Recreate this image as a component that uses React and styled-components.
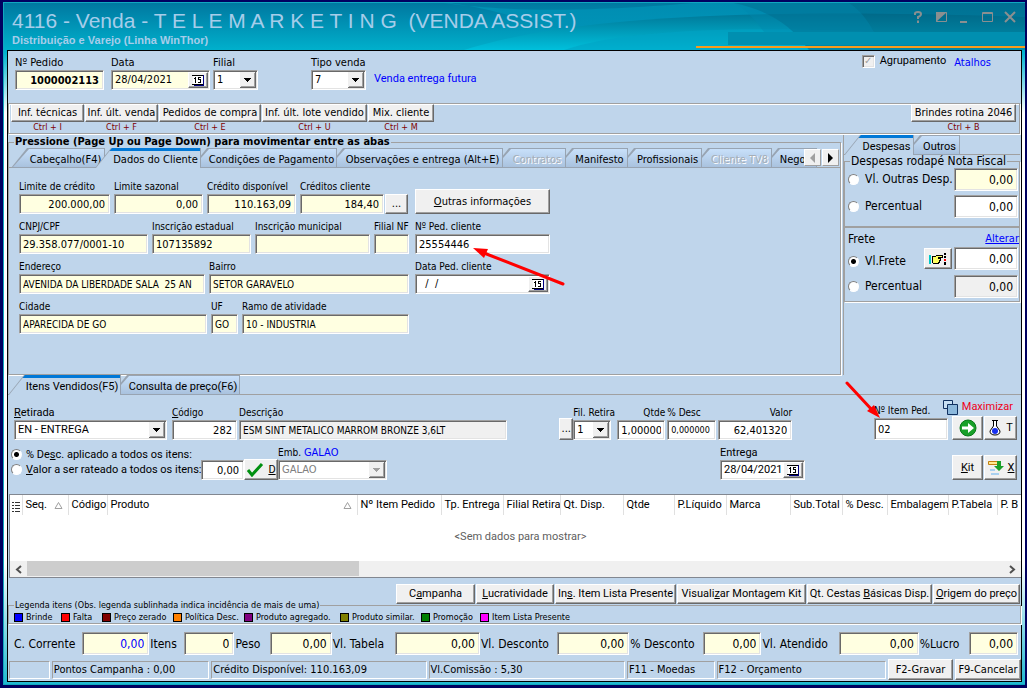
import React from 'react'
import styled, { createGlobalStyle, css } from 'styled-components'

const GlobalStyle = createGlobalStyle`
  * { box-sizing: border-box; }
  body {
    margin: 0;
    background: #000060;
    color: #000;
    font: 10px/14px "DejaVu Sans Condensed", "DejaVu Sans", sans-serif;
  }
  input, select, button { font: inherit; color: inherit; margin: 0; border-radius: 0; }
  fieldset { margin: 0; padding: 0; min-width: 0; }
`

const sans = 'Roboto, "Liberation Sans", Arial, sans-serif'
const titleFont = '"Liberation Sans", Arial, sans-serif'

const sunken = css`
  border: 1px solid;
  border-color: #a0a0a0 #fff #fff #a0a0a0;
  box-shadow: inset 1px 1px #696969, inset -1px -1px #e3e3e3;
`

const raised = css`
  border: 1px solid;
  border-color: #fff #696969 #696969 #fff;
  box-shadow: inset -1px -1px #a0a0a0;
  background: #f0f0f0;
`

const Window = styled.div`
  position: relative;
  min-height: 100vh;
  padding: 2px 2px 3px 3px;
  display: flex;
`

const Frame = styled.div`
  flex: 1;
  min-width: 0;
  display: flex;
  flex-direction: column;
  padding: 0 3px 2px;
  border: 1px solid #10a8c0;
  border-right-width: 0;
  background: linear-gradient(#00789c 0, #00b4d0 50px, #fff 110px, #fff 560px, #20b8d0 100%);
`

const TitleBar = styled.header`
  position: relative;
  height: 47px;
  margin: 0 -3px;
  padding: 6px 8px 0;
  color: #a6cdea;
  font-family: ${titleFont};
`

const Waves = styled.svg`
  position: absolute;
  inset: 0;
  width: 100%;
  height: 100%;
`

const Title = styled.h1`
  position: relative;
  margin: 0;
  font-size: 21px;
  line-height: 24px;
  font-weight: 400;
  white-space: pre;
`

const Subtitle = styled.div`
  position: relative;
  font-size: 11px;
  line-height: 14px;
  font-weight: 700;
`

const WindowButtons = styled.div`
  position: absolute;
  top: 6px;
  right: 7px;
  display: flex;
  gap: 7px;
`

const WindowButton = styled.button`
  width: 16px;
  height: 16px;
  padding: 0;
  border: 0;
  background: none;
  color: #8a8f90;
  display: flex;
`

const Panel = styled.main`
  flex: 1;
  display: flex;
  flex-direction: column;
  border: 1px solid #000;
  background: #bfd5eb;
`

const HeaderRow = styled.div`
  display: flex;
  align-items: flex-start;
  padding: 4px 30px 0 7px;
  height: 52px;
`

const FieldBox = styled.label`
  display: flex;
  flex-direction: column;
  width: ${p => p.$w}px;
  margin-left: ${p => p.$ml || 0}px;
  flex: none;
  font-family: ${p => (p.$sans ? sans : 'inherit')};
  font-size: ${p => (p.$sans || p.$large ? 11 : 10)}px;
  text-align: ${p => (p.$labelRight ? 'right' : 'left')};
  white-space: nowrap;
`

const LabelText = styled.span`
  height: 15px;
  line-height: 15px;
`

const Input = styled.input`
  ${sunken}
  width: 100%;
  min-width: 0;
  height: ${p => p.$h || 20}px;
  padding: 0 ${p => (p.$right ? 4 : 3)}px;
  font-size: ${p => p.$size || 11}px;
  font-weight: ${p => (p.$bold ? 700 : 400)};
  text-align: ${p => (p.$right ? 'right' : 'left')};
  color: ${p => p.$color || '#000'};
  background: ${p => p.$bg || '#ffffe1'};
`

const Combo = styled.span`
  ${sunken}
  position: relative;
  display: block;
  width: 100%;
  height: 20px;
  background: #fff;
  svg { position: absolute; right: 1px; top: 1px; pointer-events: none; }
`

const Select = styled.select`
  appearance: none;
  display: block;
  width: 100%;
  height: 18px;
  padding: 0 18px 0 3px;
  border: 0;
  background: none;
  font-size: 11px;
  opacity: 1;
  color: ${p => (p.disabled ? '#808080' : '#000')};
`

const DateBox = styled.span`
  ${sunken}
  display: flex;
  height: 20px;
  background: ${p => p.$bg || '#ffffe1'};
  padding: 1px;
  input {
    flex: 1;
    width: 20px;
    border: 0;
    padding: 0 0 0 2px;
    background: none;
    font-size: 11px;
  }
  button { ${raised} width: 20px; height: 16px; padding: 1px 3px; display: flex; }
`

const Btn = styled.button`
  ${raised}
  width: ${p => (p.$w ? p.$w + 'px' : 'auto')};
  height: ${p => p.$h || 20}px;
  margin-left: ${p => p.$ml || 0}px;
  padding: 0;
  flex: none;
  display: flex;
  align-items: center;
  justify-content: center;
  gap: 4px;
  font-family: ${p => (p.$sans ? sans : 'inherit')};
  font-size: 11px;
  white-space: nowrap;
`

const Note = styled.span`
  color: #00f;
  font: 11px/14px ${sans};
  margin: 17px 0 0 8px;
`

const Grouping = styled.label`
  margin: 0 0 0 auto;
  display: flex;
  align-items: center;
  gap: 5px;
  height: 12px;
  font: 11px/14px ${sans};
  input {
    appearance: none;
    ${sunken}
    width: 13px;
    height: 13px;
    background: #f0f0f0;
    display: grid;
    place-items: center;
  }
  input:checked::after { content: '✓'; color: #a0a0a0; font: 700 10px/10px "DejaVu Sans", sans-serif; }
`

const Link = styled.a`
  color: #00f;
  font-size: 11px;
  line-height: 14px;
  margin: ${p => p.$m || 0};
  text-decoration: ${p => (p.$underline ? 'underline' : 'none')};
`

const etched = css`
  border: 1px solid #a0a0a0;
  box-shadow: 1px 1px #fff, inset 1px 1px #fff;
`

const Toolbar = styled.div`
  ${etched}
  display: flex;
  height: 31px;
  margin: 0 1px 0 0;
  padding-left: 2px;
`

const Shortcut = styled.div`
  margin-left: ${p => (p.$auto ? 'auto' : 0)};
  margin-right: ${p => (p.$auto ? '3px' : '1px')};
  span { display: block; text-align: center; color: #800000; font-size: 9px; line-height: 11px; }
`

const Middle = styled.div`
  display: flex;
  gap: 2px;
  height: 241px;
`

const CustomerBox = styled.section`
  flex: 1;
  min-width: 0;
  display: flex;
  flex-direction: column;
  padding-top: 2px;
`

const Fieldset = styled.fieldset`
  border: 1px solid #a0a0a0;
  box-shadow: 1px 1px #fff;
  flex: ${p => (p.$grow ? 1 : 'none')};
  legend {
    margin-left: 5px;
    padding: 0 1px;
    font-size: ${p => p.$size || 11}px;
    line-height: 12px;
    font-weight: ${p => (p.$bold ? 700 : 400)};
    white-space: nowrap;
  }
`

const TabBar = styled.div`
  position: relative;
  display: flex;
  align-items: flex-end;
  height: 20px;
  padding-left: ${p => p.$pl || 0}px;
  overflow: hidden;
  box-shadow: inset 0 -1px #a0a0a0;
`

const Tab = styled.button`
  position: relative;
  flex: none;
  height: 20px;
  width: ${p => p.$w + 10}px;
  margin-right: -10px;
  padding: 4px 2px 0 17px;
  border: 0;
  background: #98a4b2;
  clip-path: polygon(0 100%, 16px 0, 100% 0, 100% 100%);
  z-index: ${p => (p.$active ? 20 : p.$z)};
  font-family: ${p => (p.$sans ? sans : 'inherit')};
  font-size: 11px;
  line-height: 14px;
  white-space: nowrap;
  text-align: center;
  color: ${p => (p.disabled ? '#a5adb6' : '#000')};
  text-shadow: ${p => (p.disabled ? '1px 1px #fff' : 'none')};
  &::before {
    content: '';
    position: absolute;
    z-index: -1;
    inset: ${p => (p.$active ? '0 1px 0 0' : '1px')};
    clip-path: polygon(1px 100%, 17px 0, 100% 0, 100% 100%);
    background: ${p => (p.$active
      ? 'linear-gradient(#0078d7 3px, #bfd5eb 3px)'
      : 'linear-gradient(#c8e0fa, #a9c2de)')};
  }
`

const TabArrows = styled.div`
  position: absolute;
  right: 1px;
  top: 1px;
  z-index: 30;
  display: flex;
  gap: 1px;
  background: #bfd5eb;
  button { ${raised} border-color: #fff #a0a0a0 #a0a0a0 #fff; box-shadow: none; width: 17px; height: 17px; padding: 0; display: grid; place-items: center; }
`

const CustomerForm = styled.div`
  display: grid;
  grid-template-columns: 390px 135px;
  column-gap: 6px;
  row-gap: 5px;
  padding: 11px 0 0 10px;
`

const FieldRow = styled.div`
  display: flex;
  gap: 4px;
  align-items: flex-end;
`

const Expenses = styled.aside`
  width: 178px;
  margin-top: 1px;
  padding-right: 1px;
  border-left: 1px solid #a0a0a0;
`

const ExpenseGrid = styled.div`
  display: grid;
  grid-template-columns: 1fr 64px;
  align-items: center;
  row-gap: ${p => p.$gap}px;
  padding: ${p => p.$p};
  font-size: 12px;
`

const Radio = styled.label`
  display: flex;
  align-items: center;
  gap: ${p => (p.$sans ? 4 : 6)}px;
  white-space: nowrap;
  font-family: ${p => (p.$sans ? sans : 'inherit')};
  font-size: ${p => (p.$sans ? 11 : 12)}px;
  line-height: 15px;
  input {
    appearance: none;
    flex: none;
    width: 11px;
    height: 11px;
    border: 1px solid;
    border-color: #808080 #fff #fff #808080;
    border-radius: 50%;
    background: #fff;
  }
  input:checked { background: radial-gradient(circle, #000 2px, #fff 3px); }
`

const FreightTitle = styled.div`
  display: flex;
  justify-content: space-between;
  padding: 4px 0 0 3px;
  font-size: 12px;
  line-height: 15px;
`

const Spacer = styled.div`
  flex: ${p => p.$n} 1 0;
`

const ItemRow = styled.div`
  display: flex;
  align-items: flex-end;
  padding: ${p => p.$p};
`

const RadioStack = styled.div`
  width: 190px;
  padding-bottom: 3px;
`

const PedStack = styled.div`
  display: flex;
  flex-direction: column;
`

const Maximize = styled.div`
  display: flex;
  align-items: center;
  justify-content: space-between;
  width: 139px;
  height: 18px;
  font-size: 10px;
  label { padding-top: 8px; }
  button { display: flex; align-items: center; gap: 4px; padding: 0; border: 0; background: none; color: #f00018; font: 11px/14px ${sans}; }
`

const GridPanel = styled.div`
  margin: 14px 0 0 1px;
  border: 1px solid #828790;
  border-width: 1px 0 1px 1px;
  background: #fff;
  flex: 1;
  display: flex;
  flex-direction: column;
  overflow: hidden;
`

const ItemsTable = styled.table`
  table-layout: fixed;
  width: 100%;
  border-collapse: collapse;
  font: 11px/14px ${sans};
  th {
    height: 20px;
    padding: 0 0 0 3px;
    border-right: 1px solid #e0e0e0;
    font-weight: 400;
    text-align: left;
    white-space: nowrap;
    overflow: hidden;
  }
  th:last-child { border-right: 0; }
  th svg { float: right; margin: 3px 5px 0 0; }
  th:first-child svg { float: none; margin: 2px 0 0; display: block; }
  th:first-child { padding-left: 2px; }
  td { height: 44px; padding: 0 0 0 10px; text-align: center; color: #606060; }
`

const ScrollBar = styled.div`
  display: flex;
  margin-top: auto;
  height: 16px;
  background: #f0f0f0;
  button { width: 17px; padding: 0; border: 0; background: none; display: grid; place-items: center; }
  div { flex: 1; }
  div::before { content: ''; display: block; width: 34%; height: 15px; background: #cdcdcd; }
`

const ActionRow = styled.div`
  display: flex;
  justify-content: flex-end;
  gap: 1px;
  padding: 6px 1px 0 0;
  height: 21px;
`

const Legend = styled.ul`
  display: grid;
  grid-template-columns: 47fr 41fr 71fr 71fr 96fr 81fr 59fr 540fr;
  margin: 0;
  padding: 0 0 0 5px;
  list-style: none;
  font-size: 9px;
  line-height: 12px;
  li { display: flex; align-items: center; gap: 3px; white-space: nowrap; }
`

const Swatch = styled.i`
  width: 9px;
  height: 9px;
  border: 1px solid #000;
  background: ${p => p.$c};
`

const Totals = styled.div`
  display: grid;
  grid-template-columns: 69fr 67fr 35fr 50fr 35fr 62fr 63fr 85fr 77fr 72fr 74fr 58fr 77fr 80fr 50fr 49fr;
  align-items: center;
  padding: 8px 3px 1px 5px;
  font-size: 12px;
  white-space: nowrap;
  label { padding-left: 1px; }
`

const StatusBar = styled.footer`
  display: grid;
  grid-template-columns: 41fr 158fr 216fr 197fr 88fr 170fr 65px 66px;
  gap: 2px;
  align-items: center;
  padding: 3px 0 1px 1px;
  font-size: 11px;
`

const StatusCell = styled.div`
  height: 18px;
  padding-left: 1px;
  border: 1px solid;
  border-color: #a0a0a0 #fff #fff #a0a0a0;
  line-height: 16px;
  white-space: nowrap;
  overflow: hidden;
`

const Annotations = styled.svg`
  position: absolute;
  left: 0;
  top: 0;
  z-index: 50;
  pointer-events: none;
`

function Field({ label, w, ml, large, sans: useSans, labelRight, children, ...input }) {
  return (
    <FieldBox $w={w} $ml={ml} $large={large} $sans={useSans} $labelRight={labelRight}>
      <LabelText>{label}</LabelText>
      {children || <Input {...input} />}
    </FieldBox>
  )
}

function ComboBox({ value, disabled, ...rest }) {
  return (
    <Combo>
      <Select disabled={disabled} {...rest}><option>{value}</option></Select>
      <svg width="16" height="16" shapeRendering="crispEdges">
        <path d="M0 0h16v16H0z" fill="#f0f0f0" />
        <path d="M15 0v15H0" fill="none" stroke="#fff" />
        <path d="M15.5 0v15.5H0" fill="none" stroke="#696969" />
        <path d="M14.5 1v13.5H1" fill="none" stroke="#a0a0a0" />
        <path d="M4 6h7v1h-1v1H9v1H8v1H7v-1H6V8H5V7H4z" fill={disabled ? '#a0a0a0' : '#000'} />
      </svg>
    </Combo>
  )
}

function DateInput({ value, bg }) {
  return (
    <DateBox $bg={bg}>
      <input defaultValue={value} />
      <button aria-label="Calendário">
        <svg width="12" height="12" shapeRendering="crispEdges">
          <path d="M1 1h10v9H1z" fill="#fff" />
          <path d="M0 1h11M0 10.5h11" stroke="#000" />
          <path d="M11 1v10H2" fill="none" stroke="#000080" />
          <path d="M3 3v6M2 4h1M9 3.5H6v2h2.5v3H5.5" fill="none" stroke="#000" />
        </svg>
      </button>
    </DateBox>
  )
}

const SortArrow = () => (
  <svg width="9" height="9"><path d="M1 7.5 4.5 1.5 8 7.5z" fill="none" stroke="#a0a0a0" /></svg>
)

const Arrow = ({ left, off }) => (
  <svg width="9" height="10"><path d={left ? 'M7 0v10L2 5z' : 'M2 0v10l5-5z'} fill={off ? '#a0a0a0' : '#000'} /></svg>
)

const shortcuts = [
  ['Inf. técnicas', 'Ctrl + I', 73, 0],
  ['Inf. últ. venda', 'Ctrl + F', 73, 0],
  ['Pedidos de compra', 'Ctrl + E', 102, 0],
  ['Inf. últ. lote vendido', 'Ctrl + U', 105, 0],
  ['Mix. cliente', 'Ctrl + M', 66, 0],
  ['Brindes rotina 2046', 'Ctrl + B', 105, 1],
]

const customerTabs = [
  ['Cabeçalho(F4)', 84],
  ['Dados do Cliente', 96],
  ['Condições de Pagamento', 136],
  ['Observações e entrega (Alt+E)', 166],
  ['Contratos', 63],
  ['Manifesto', 62],
  ['Profissionais', 74],
  ['Cliente TV8', 70],
  ['Negoc.', 45],
]

const columns = [
  ['Seq.', 46, true],
  ['Código', 39],
  ['Produto', 250, true],
  ['Nº Item Pedido', 84],
  ['Tp. Entrega', 62],
  ['Filial Retira', 57],
  ['Qt. Disp.', 63],
  ['Qtde', 51],
  ['P.Líquido', 52],
  ['Marca', 64],
  ['Sub.Total', 52],
  ['% Desc.', 45],
  ['Embalagem', 61],
  ['P.Tabela', 49],
  ['P. B', 24],
]

const legend = [
  ['Brinde', '#0000ff'],
  ['Falta', '#ff0000'],
  ['Preço zerado', '#800000'],
  ['Política Desc.', '#ff8000'],
  ['Produto agregado.', '#800080'],
  ['Produto similar.', '#808000'],
  ['Promoção', '#008000'],
  ['Item Lista Presente', '#ff00ff'],
]

const totals = [
  ['C. Corrente', '0,00', '#00f'],
  ['Itens', '0'],
  ['Peso', '0,00'],
  ['Vl. Tabela', '0,00'],
  ['Vl. Desconto', '0,00'],
  ['% Desconto', '0,00'],
  ['Vl. Atendido', '0,00'],
  ['%Lucro', '0,00'],
]

export default function App() {
  return (
    <Window>
      <GlobalStyle />
      <Frame>
        <TitleBar>
          <Waves viewBox="0 0 1021 47" preserveAspectRatio="none">
            <defs>
              <linearGradient id="sky" x2="0" y2="1"><stop stopColor="#0078a0" /><stop offset="1" stopColor="#00b0cc" /></linearGradient>
              <linearGradient id="swell" x2="0" y2="1"><stop stopColor="#007898" /><stop offset="1" stopColor="#00c0dc" /></linearGradient>
              <linearGradient id="crest" x2="1" y2="0"><stop stopColor="#0090b4" /><stop offset="1" stopColor="#0098bc" stopOpacity="0.3" /></linearGradient>
            </defs>
            <path d="M0 0h1021v47H0z" fill="url(#sky)" />
            <path d="M440 0C500 8 570 10 690 0H1021V14C860 8 690 10 560 27C490 8 470 2 440 0z" fill="url(#crest)" />
            <path d="M460 47C560 16 720 4 1021 14V47z" fill="url(#swell)" />
            <path d="M560 47C610 30 700 24 820 27C900 29 960 38 1000 47z" fill="#00a4c4" opacity=".6" />
            <path d="M730 0C765 8 785 20 805 47H1021V0z" fill="#005878" opacity=".45" />
            <path d="M845 0C860 10 866 22 870 29H760C750 15 740 5 730 0z" fill="#0088ac" opacity=".4" />
            <path d="M724 29h297v13H724z" fill="#008fb0" />
            <path d="M692 43h329v2H692z" fill="#f89c1c" />
          </Waves>
          <Title>{'4116 - Venda - T E L E M A R K E T I N G  (VENDA ASSIST.)'}</Title>
          <Subtitle>Distribuição e Varejo (Linha WinThor)</Subtitle>
          <WindowButtons>
            <WindowButton aria-label="Ajuda"><svg width="16" height="16"><path d="M5 6V4.500Q5 3 8 3T11 5T8 8V10M8 11.500V14" fill="none" stroke="currentColor" strokeWidth="2" /></svg></WindowButton>
            <WindowButton aria-label="Tema"><svg width="16" height="16"><path d="M3.500 3.500h10v9h-10z" fill="none" stroke="currentColor" /><path d="M3 3h11L3 13z" fill="currentColor" /></svg></WindowButton>
            <WindowButton aria-label="Minimizar"><svg width="16" height="16"><path d="M4 13h7" stroke="currentColor" strokeWidth="2" /></svg></WindowButton>
            <WindowButton aria-label="Restaurar"><svg width="16" height="16"><path d="M3.500 3.500h10v9h-10zM3 4.500h11" fill="none" stroke="currentColor" /></svg></WindowButton>
            <WindowButton aria-label="Fechar"><svg width="16" height="16"><path d="M3 3 13 13M13 3 3 13" stroke="currentColor" strokeWidth="2" /></svg></WindowButton>
          </WindowButtons>
        </TitleBar>

        <Panel>
          <HeaderRow>
            <Field label="Nº Pedido" w={89} large defaultValue="1000002113" $right $bold />
            <Field label="Data" w={99} ml={7} large><DateInput value="28/04/2021" /></Field>
            <Field label="Filial" w={45} ml={3} large><ComboBox value="1" /></Field>
            <Field label="Tipo venda" w={55} ml={53} large><ComboBox value="7" /></Field>
            <Note>Venda entrega futura</Note>
            <Grouping><input type="checkbox" defaultChecked />Agrupamento</Grouping>
            <Link href="#atalhos" $m="1px 0 0 8px">Atalhos</Link>
          </HeaderRow>

          <Toolbar>
            {shortcuts.map(([name, keys, w, auto]) => (
              <Shortcut key={name} $auto={auto}>
                <Btn $w={w} $h={18}>{name}</Btn>
                <span>{keys}</span>
              </Shortcut>
            ))}
          </Toolbar>

          <Middle>
            <CustomerBox>
              <Fieldset $bold $grow>
                <legend>Pressione (Page Up ou Page Down) para movimentar entre as abas</legend>
                <TabBar $pl={2}>
                  {customerTabs.map(([name, w], i) => (
                    <Tab key={name} $w={w} $z={10 - i} $active={i === 1} disabled={i === 4 || i === 7}>{name}</Tab>
                  ))}
                  <TabArrows>
                    <button aria-label="Anterior"><Arrow left off /></button>
                    <button aria-label="Próxima"><Arrow /></button>
                  </TabArrows>
                </TabBar>
                <CustomerForm>
                  <FieldRow>
                    <Field label="Limite de crédito" w={91} defaultValue="200.000,00" $right />
                    <Field label="Limite sazonal" w={89} defaultValue="0,00" $right />
                    <Field label="Crédito disponível" w={89} defaultValue="110.163,09" $right />
                    <Field label="Créditos cliente" w={84} defaultValue="184,40" $right />
                    <Btn $w={23} $ml={-3} aria-label="Detalhes">...</Btn>
                  </FieldRow>
                  <FieldRow><Btn $w={135} $h={25}><span><u>O</u>utras informações</span></Btn></FieldRow>
                  <FieldRow>
                    <Field label="CNPJ/CPF" w={129} defaultValue="29.358.077/0001-10" />
                    <Field label="Inscrição estadual" w={99} defaultValue="107135892" />
                    <Field label="Inscrição municipal" w={115} />
                    <Field label="Filial NF" w={35} />
                  </FieldRow>
                  <Field label="Nº Ped. cliente" w={135} defaultValue="25554446" $bg="#fff" />
                  <FieldRow>
                    <Field label="Endereço" w={186} defaultValue="AVENIDA DA LIBERDADE SALA  25 AN" $size={10} />
                    <Field label="Bairro" w={200} defaultValue="SETOR GARAVELO" $size={10} />
                  </FieldRow>
                  <Field label="Data Ped. cliente" w={135}><DateInput value="  /  /" bg="#fff" /></Field>
                  <FieldRow>
                    <Field label="Cidade" w={188} defaultValue="APARECIDA DE GO" $size={10} />
                    <Field label="UF" w={27} defaultValue="GO" $size={10} />
                    <Field label="Ramo de atividade" w={167} defaultValue="10 - INDUSTRIA" $size={10} />
                  </FieldRow>
                </CustomerForm>
              </Fieldset>
            </CustomerBox>

            <Expenses>
              <TabBar>
                <Tab $w={60} $sans $active>Despesas</Tab>
                <Tab $w={46} $sans $z={1}>Outros</Tab>
              </TabBar>
              <Fieldset $size={12}>
                <legend>Despesas rodapé Nota Fiscal</legend>
                <ExpenseGrid $gap={4} $p="1px 1px 8px 3px">
                  <Radio><input type="radio" name="despesa" />Vl. Outras Desp.</Radio>
                  <Input defaultValue="0,00" aria-label="Valor outras despesas" $right $h={23} $size={12} />
                  <Radio><input type="radio" name="despesa" />Percentual</Radio>
                  <Input defaultValue="0,00" aria-label="Percentual de despesas" $right $h={23} $size={12} $bg="#fff" />
                </ExpenseGrid>
              </Fieldset>
              <Fieldset>
                <FreightTitle>Frete<Link href="#frete" $underline>Alterar</Link></FreightTitle>
                <ExpenseGrid $gap={5} $p="0 1px 3px 3px">
                  <FieldRow>
                    <Radio><input type="radio" name="frete" defaultChecked />Vl.Frete</Radio>
                    <Btn $w={28} $h={21} $ml={14} aria-label="Selecionar frete">
                      <svg width="18" height="14" shapeRendering="crispEdges">
                        <path d="M1 3v9" stroke="#00c8c8" strokeWidth="2" />
                        <path d="M3 4h4l2-1h4v2H9v1h2v2H10v2H9v1H4L3 10z" fill="#ffff60" stroke="#000" />
                        <path d="M16 1v2M16 4v2M16 10v3" stroke="#000" strokeWidth="2" />
                        <path d="M16 7v2" stroke="#f00" strokeWidth="2" />
                      </svg>
                    </Btn>
                  </FieldRow>
                  <Input defaultValue="0,00" aria-label="Valor do frete" $right $h={23} $size={12} $bg="#fff" />
                  <Radio><input type="radio" name="frete" />Percentual</Radio>
                  <Input defaultValue="0,00" aria-label="Percentual de frete" $right $h={23} $size={12} $bg="#f0f0f0" />
                </ExpenseGrid>
              </Fieldset>
            </Expenses>
          </Middle>

          <TabBar>
            <Tab $w={103} $sans $active>Itens Vendidos(F5)</Tab>
            <Tab $w={119} $sans $z={1}>Consulta de preço(F6)</Tab>
          </TabBar>

          <ItemRow $p="3px 4px 0 6px">
            <Field label={<><u>R</u>etirada</>} w={153} sans><ComboBox value="EN - ENTREGA" /></Field>
            <Field label={<><u>C</u>ódigo</>} w={65} ml={5} defaultValue="282" $right $bg="#fff" />
            <Field label="Descrição" w={268} ml={2} defaultValue="ESM SINT METALICO MARROM BRONZE 3,6LT" $size={10} $bg="#f0f0f0" />
            <Spacer $n={53} />
            <Btn $w={14} $h={22} aria-label="Buscar filial">...</Btn>
            <Field label="Fil. Retira" w={38}><ComboBox value="1" /></Field>
            <Field label="Qtde" w={48} ml={6} labelRight defaultValue="1,000000" $bg="#fff" />
            <Field label="% Desc" w={49} ml={2} defaultValue="0,000000" $size={9} $bg="#fff" />
            <Field label="Valor" w={74} ml={2} labelRight defaultValue="62,401320" $right $bg="#fff" />
            <Spacer $n={83} />
            <PedStack>
              <Maximize>
                <label htmlFor="item-ped">Nº Item Ped.</label>
                <button>
                  <svg width="16" height="16"><path d="M1.500 1.500h9v8h-9z" fill="#c8e0f4" stroke="#103060" /><path d="M5.500 5.500h10v10h-10z" fill="#8cb8dc" stroke="#103060" /></svg>
                  Maximizar
                </button>
              </Maximize>
              <FieldRow>
                <FieldBox as="div" $w={74}><Input id="item-ped" defaultValue="02" $bg="#fff" $h={22} /></FieldBox>
                <Btn $w={31} $h={24} aria-label="Adicionar item">
                  <svg width="18" height="18"><circle cx="9" cy="9" r="8" fill="#18a028" stroke="#087818" /><path d="M3 7.500h6V4l6 5-6 5v-3.500H3z" fill="#fff" /></svg>
                </Btn>
                <Btn $w={33} $h={24} $ml={-3} $sans>
                  <svg width="14" height="18"><path d="M4 1.500h6M5.500 2v5L2 12q0 4 5 4t5-4L8.500 7V2" fill="#fff" stroke="#000" /><circle cx="7" cy="12" r="3" fill="#1830f0" /></svg>
                  T
                </Btn>
              </FieldRow>
            </PedStack>
          </ItemRow>

          <ItemRow $p="5px 4px 0 3px">
            <RadioStack>
              <Radio $sans><input type="radio" name="rateio" defaultChecked /><span>% De<u>s</u>c. aplicado a todos os itens:</span></Radio>
              <Radio $sans><input type="radio" name="rateio" /><span><u>V</u>alor a ser rateado a todos os itens:</span></Radio>
            </RadioStack>
            <FieldBox as="div" $w={43}><Input defaultValue="0,00" aria-label="Desconto" $right $bg="#fff" /></FieldBox>
            <Btn $w={34} $h={21} $sans>
              <svg width="18" height="15"><path d="M2 8 6 13 16 2" fill="none" stroke="#009010" strokeWidth="3" /></svg>
              <u>D</u>
            </Btn>
            <Field label={<>Emb. <Link as="span">GALAO</Link></>} w={109}><ComboBox value="GALAO" disabled /></Field>
            <Spacer $n={333} />
            <Field label="Entrega" w={85} sans><DateInput value="28/04/2021" bg="#fff" /></Field>
            <Spacer $n={147} />
            <Btn $w={31} $h={25} $sans><span><u>K</u>it</span></Btn>
            <Btn $w={33} $h={25} $ml={1} $sans>
              <svg width="17" height="17"><path d="M1.500 2.500h9v3h-9z" fill="#ffe890" stroke="#c08010" /><path d="M10 2h4v5h3l-5 5-5-5h3z" fill="#18a028" /><path d="M3 11h5M4 15h8" stroke="#a8d0f0" strokeWidth="2" /></svg>
              <u>X</u>
            </Btn>
          </ItemRow>

          <GridPanel>
            <ItemsTable>
              <colgroup>
                <col style={{ width: 12 }} />
                {columns.map(([name, w], i) => <col key={name} style={{ width: i === columns.length - 1 ? undefined : w }} />)}
              </colgroup>
              <thead>
                <tr>
                  <th><svg width="9" height="11" shapeRendering="crispEdges"><path d="M3 1.500h5M3 4.500h5M3 7.500h5M3 10.500h5M0 1.500h2M0 4.500h2M0 7.500h2M0 10.500h2" stroke="#333" /></svg></th>
                  {columns.map(([name, , sort]) => <th key={name}>{sort && <SortArrow />}{name}</th>)}
                </tr>
              </thead>
              <tbody>
                <tr><td colSpan={16}>&lt;Sem dados para mostrar&gt;</td></tr>
              </tbody>
            </ItemsTable>
            <ScrollBar>
              <button aria-label="Rolar à esquerda"><svg width="7" height="9"><path d="M6 1 2 4.500 6 8" fill="none" stroke="#505050" strokeWidth="2" /></svg></button>
              <div />
              <button aria-label="Rolar à direita"><svg width="7" height="9"><path d="M1 1 5 4.500 1 8" fill="none" stroke="#505050" strokeWidth="2" /></svg></button>
            </ScrollBar>
          </GridPanel>

          <ActionRow>
            <Btn $w={79} $sans><span>C<u>a</u>mpanha</span></Btn>
            <Btn $w={78} $sans><span><u>L</u>ucratividade</span></Btn>
            <Btn $w={121} $sans><span>In<u>s</u>. Item Lista Presente</span></Btn>
            <Btn $w={129} $sans><span>Visuali<u>z</u>ar Montagem Kit</span></Btn>
            <Btn $w={125} $sans><span>Qt. Cestas <u>B</u>ásicas Disp.</span></Btn>
            <Btn $w={87} $sans><span><u>O</u>rigem do preço</span></Btn>
          </ActionRow>

          <Fieldset $size={9}>
            <legend>Legenda itens (Obs. legenda sublinhada indica incidência de mais de uma)</legend>
            <Legend>
              {legend.map(([name, c]) => <li key={name}><Swatch $c={c} />{name}</li>)}
            </Legend>
          </Fieldset>

          <Totals>
            {totals.map(([name, value, color], i) => (
              <React.Fragment key={name}>
                <label htmlFor={'total-' + i}>{name}</label>
                <Input id={'total-' + i} defaultValue={value} $color={color} $right $h={23} $size={12} />
              </React.Fragment>
            ))}
          </Totals>

          <StatusBar>
            <StatusCell />
            <StatusCell>Pontos Campanha : 0,00</StatusCell>
            <StatusCell>Crédito Disponível: 110.163,09</StatusCell>
            <StatusCell>Vl.Comissão : 5,30</StatusCell>
            <StatusCell>F11 - Moedas</StatusCell>
            <StatusCell>F12 - Orçamento</StatusCell>
            <Btn $h={21}>F2-Gravar</Btn>
            <Btn $h={21}>F9-Cancelar</Btn>
          </StatusBar>
        </Panel>
      </Frame>

      <Annotations width="1027" height="688">
        <path d="M563 284 484 253M847 383 873 411" stroke="#f00" strokeWidth="3" strokeLinecap="round" />
        <path d="M473 248 488 249 484 258zM880 418 867 411 874 405z" fill="#f00" />
      </Annotations>
    </Window>
  )
}
